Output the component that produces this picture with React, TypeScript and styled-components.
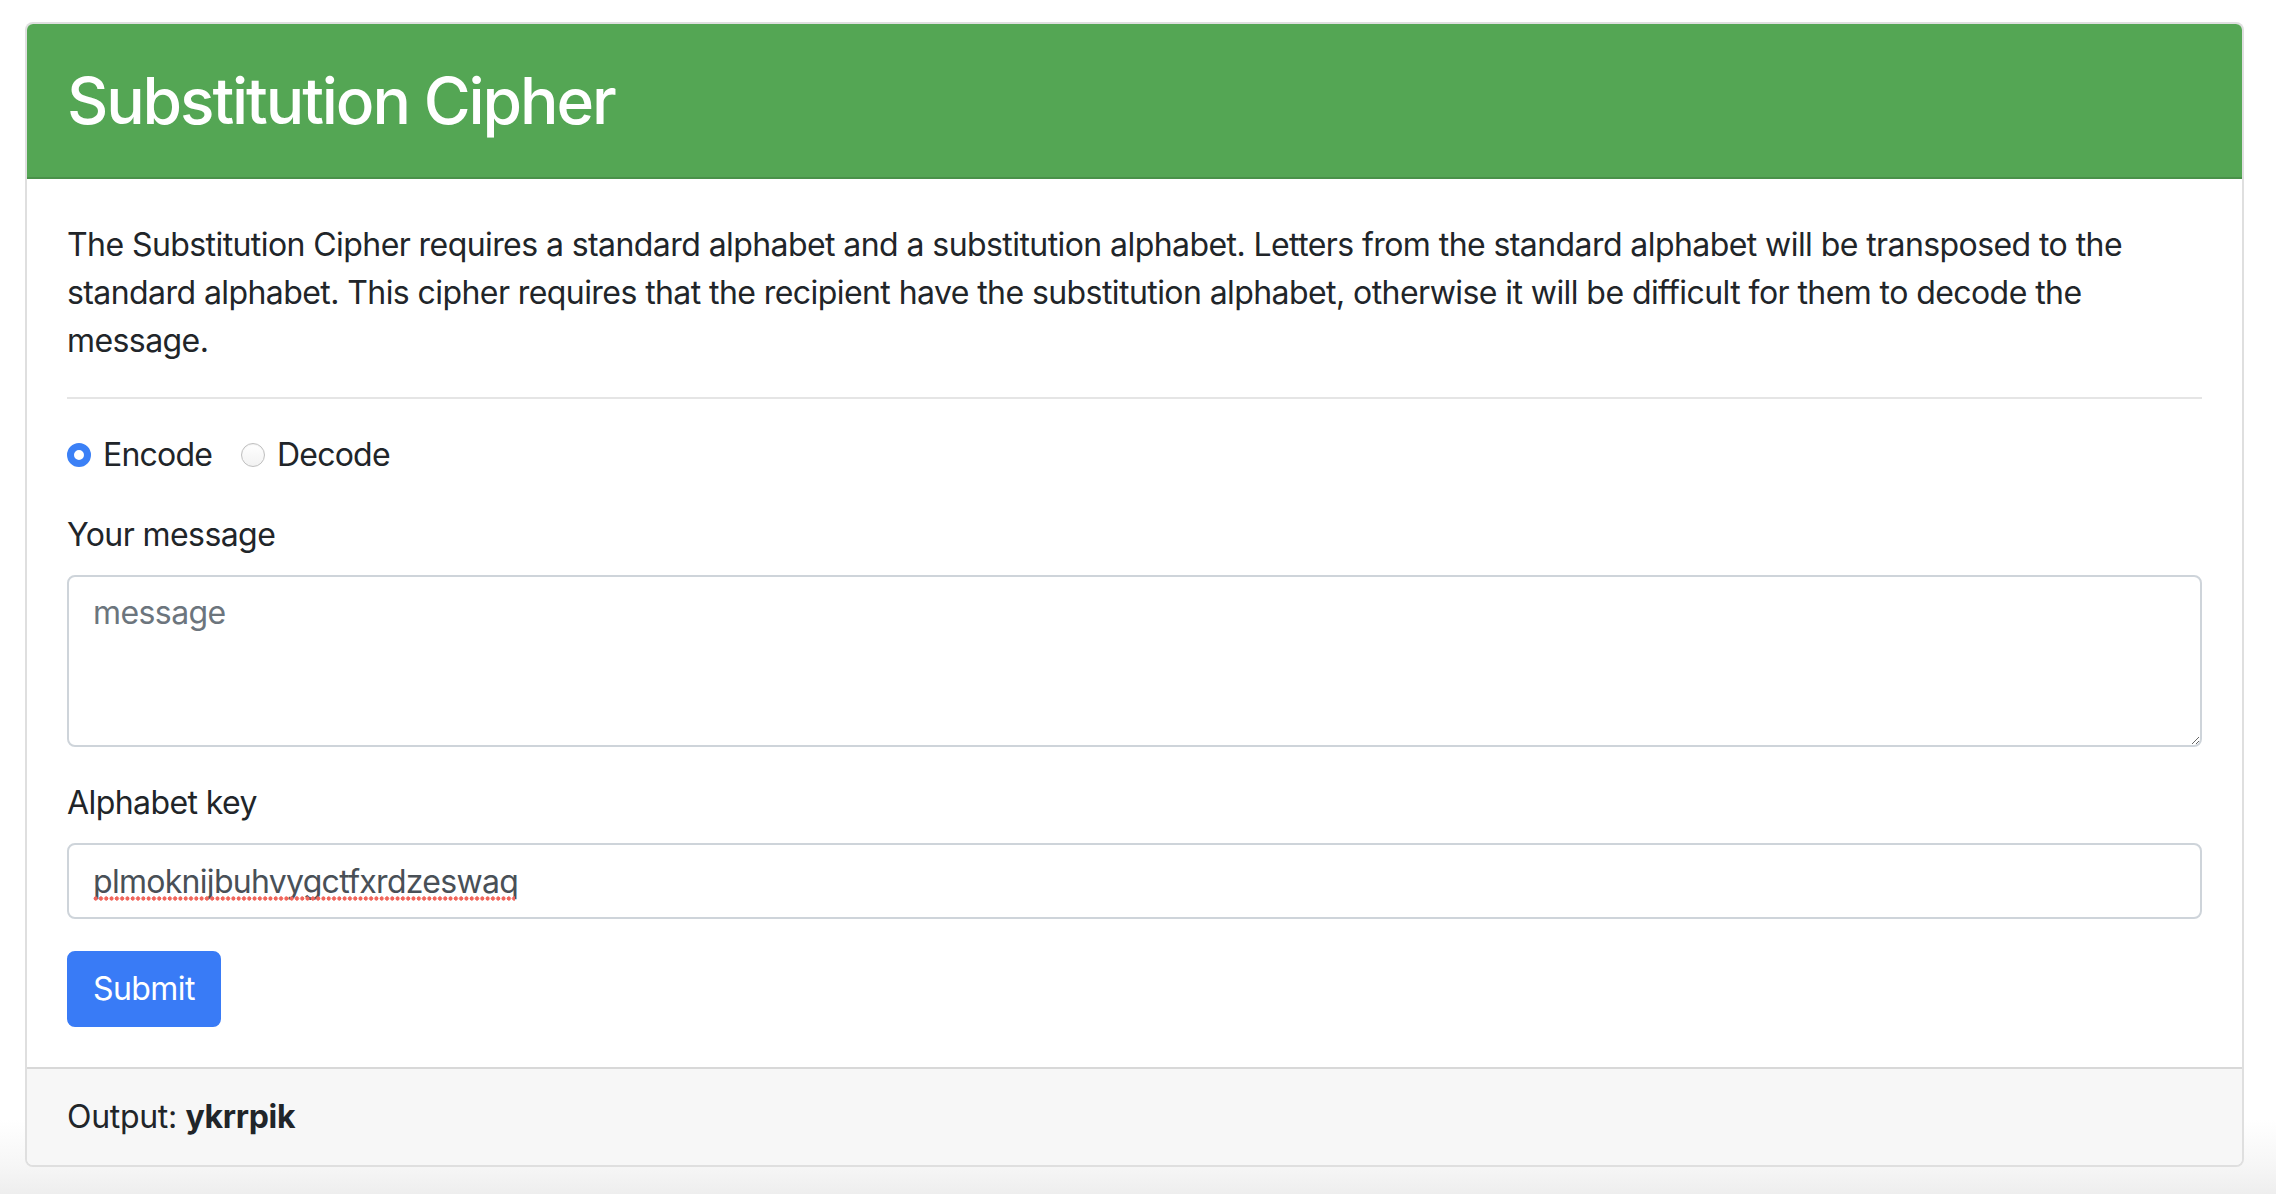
import React from "react";
import styled, { createGlobalStyle } from "styled-components";

const GlobalStyle = createGlobalStyle`
  html, body {
    margin: 0;
    padding: 0;
    background: #ffffff;
  }
  body {
    font-family: Inter, "Liberation Sans", Arial, sans-serif;
    color: #212529;
    -webkit-font-smoothing: antialiased;
  }
  * { box-sizing: border-box; }
`;

const Page = styled.div`
  min-height: 1194px;
  padding: 22px 32px 28px 25px;
  background: linear-gradient(
    to bottom,
    #ffffff 0px,
    #ffffff 1120px,
    #f6f6f6 1166px,
    #eeeeee 1194px
  );
`;

const Card = styled.section`
  display: flex;
  flex-direction: column;
  border: 2px solid rgba(0, 0, 0, 0.125);
  border-radius: 8px;
  overflow: hidden;
  background: #ffffff;
`;

const CardHeader = styled.header`
  background: #54a654;
  border-bottom: 2px solid rgba(0, 0, 0, 0.125);
  padding: 38px 40px 38px;
`;

const Title = styled.h2`
  margin: 0;
  font-size: 64px;
  line-height: 77px;
  font-weight: 500;
  letter-spacing: -0.033em;
  color: #ffffff;
`;

const CardBody = styled.div`
  padding: 42px 40px 40px;
`;

const Intro = styled.p`
  margin: 0;
  font-size: 32px;
  line-height: 48px;
  letter-spacing: -0.018em;
`;

const Divider = styled.hr`
  margin: 32px 0;
  border: 0;
  border-top: 2px solid rgba(0, 0, 0, 0.1);
`;

const RadioRow = styled.div`
  display: flex;
  align-items: center;
  height: 48px;
  margin: 2px 0 32px;
`;

const RadioLabel = styled.label`
  display: inline-flex;
  align-items: center;
  margin-right: 29px;
  font-size: 32px;
  line-height: 48px;
  letter-spacing: -0.025em;
  cursor: pointer;
`;

const RadioInput = styled.input.attrs({ type: "radio" })`
  appearance: none;
  -webkit-appearance: none;
  width: 24px;
  height: 24px;
  margin: 0 12px 0 0;
  border-radius: 50%;
  border: 1.5px solid #bfbfbf;
  background: linear-gradient(to bottom, #ffffff, #f2f2f2);
  box-shadow: inset 0 1px 1px rgba(0, 0, 0, 0.06);
  flex: none;

  &:checked {
    border: 7.5px solid #3b80f6;
    background: #ffffff;
    box-shadow: none;
  }
`;

const FormGroup = styled.div`
  display: flex;
  flex-direction: column;
  margin-bottom: 32px;
`;

const FieldLabel = styled.label`
  font-size: 32px;
  line-height: 48px;
  letter-spacing: -0.018em;
  margin-bottom: 16px;
`;

const fieldBase = `
  display: block;
  width: 100%;
  font-family: Inter, "Liberation Sans", Arial, sans-serif;
  font-size: 32px;
  line-height: 48px;
  letter-spacing: -0.018em;
  color: #495057;
  background: #ffffff;
  border: 2px solid #ced4da;
  border-radius: 8px;
  padding: 12px 24px;
  outline: none;
  &::placeholder {
    color: #6c757d;
    opacity: 1;
  }
`;

const MessageArea = styled.textarea`
  ${fieldBase}
  height: 172px;
  resize: vertical;
`;

const KeyField = styled.div`
  position: relative;
`;

const KeyInput = styled.input`
  ${fieldBase}
  height: 76px;
  letter-spacing: -0.022em;
`;

const SpellMark = styled.span`
  position: absolute;
  left: 26px;
  top: 53px;
  width: 422px;
  height: 5px;
  pointer-events: none;
  background-image: radial-gradient(
    circle,
    #f0665c 1.9px,
    transparent 2.4px
  );
  background-size: 5.3px 5px;
  background-repeat: repeat-x;
`;

const SubmitButton = styled.button`
  align-self: flex-start;
  font-family: Inter, "Liberation Sans", Arial, sans-serif;
  font-size: 32px;
  line-height: 48px;
  letter-spacing: -0.018em;
  color: #ffffff;
  background: #397bf6;
  border: 2px solid #397bf6;
  border-radius: 8px;
  padding: 12px 24px;
  cursor: pointer;
`;

const CardFooter = styled.footer`
  background: #f7f7f7;
  border-top: 2px solid rgba(0, 0, 0, 0.125);
  padding: 24px 40px;
  font-size: 32px;
  line-height: 48px;
  letter-spacing: -0.01em;
`;

const Result = styled.strong`
  font-weight: 700;
`;

export default function App() {
  return (
    <>
      <GlobalStyle />
      <Page>
        <Card>
          <CardHeader>
            <Title>Substitution Cipher</Title>
          </CardHeader>
          <CardBody>
            <Intro>
              The Substitution Cipher requires a standard alphabet and a
              substitution alphabet. Letters from the standard alphabet will be
              transposed to the standard alphabet. This cipher requires that the
              recipient have the substitution alphabet, otherwise it will be
              difficult for them to decode the message.
            </Intro>
            <Divider />
            <form onSubmit={(e) => e.preventDefault()}>
              <RadioRow>
                <RadioLabel>
                  <RadioInput name="mode" value="encode" defaultChecked />
                  Encode
                </RadioLabel>
                <RadioLabel>
                  <RadioInput name="mode" value="decode" />
                  Decode
                </RadioLabel>
              </RadioRow>
              <FormGroup>
                <FieldLabel htmlFor="message">Your message</FieldLabel>
                <MessageArea id="message" rows={3} placeholder="message" />
              </FormGroup>
              <FormGroup>
                <FieldLabel htmlFor="key">Alphabet key</FieldLabel>
                <KeyField>
                  <KeyInput
                    id="key"
                    type="text"
                    spellCheck
                    defaultValue="plmoknijbuhvygctfxrdzeswaq"
                  />
                  <SpellMark />
                </KeyField>
              </FormGroup>
              <SubmitButton type="submit">Submit</SubmitButton>
            </form>
          </CardBody>
          <CardFooter>
            Output: <Result>ykrrpik</Result>
          </CardFooter>
        </Card>
      </Page>
    </>
  );
}
